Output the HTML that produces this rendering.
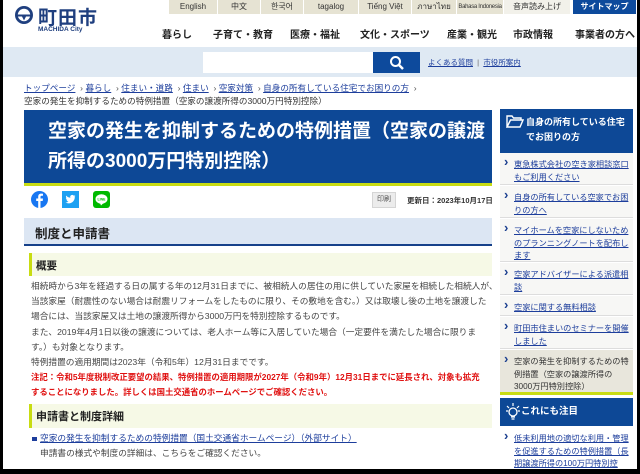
<!DOCTYPE html>
<html><head><meta charset="utf-8"><style>
*{margin:0;padding:0;box-sizing:border-box}
body{width:640px;height:474px;background:#000;overflow:hidden;font-family:"Liberation Sans","Noto Sans CJK JP",sans-serif;color:#333}
#pg{position:absolute;left:3px;top:0;width:634px;height:469px;background:#fff;overflow:hidden}
.a{position:absolute;white-space:nowrap}
a{color:#1d3e9c;text-decoration:underline}
.lang{position:absolute;top:0;height:14px;background:#e6e3d3;font-size:8px;text-align:center;line-height:14px;color:#333;border-right:1px solid #fff;white-space:nowrap;overflow:hidden}
.nav{position:absolute;top:26px;font-size:10px;font-weight:bold;color:#222;white-space:nowrap}
.bt{font-size:8.7px;line-height:15.2px;color:#444}
.sb{position:absolute;left:497px;width:133px;font-size:8.2px;line-height:12.5px;background:#f7f7f5;border-bottom:1px solid #ddd;padding:6px 4px 6px 14px}
.sb:before{content:"›";position:absolute;left:4px;top:3px;font-size:13px;font-weight:bold;color:#1b3f8f}
</style></head><body><div id="pg">
<svg class="a" style="left:11px;top:5px" width="20" height="20" viewBox="0 0 20 20"><circle cx="10" cy="10" r="9" fill="#1f3f7f"/><circle cx="10" cy="10" r="6.2" fill="#fff"/><path d="M3 9.5h14v2H12l-2 4-2-4H3z" fill="#1f3f7f"/></svg>
<div class="a" style="left:35px;top:3px;font-size:19px;font-weight:bold;color:#1f3f7f;letter-spacing:1px">町田市</div>
<div class="a" style="left:35px;top:26px;font-size:6.5px;font-weight:bold;color:#1f3f7f">MACHIDA City</div>
<div class="lang" style="left:166px;width:49px">English</div>
<div class="lang" style="left:215px;width:43px">中文</div>
<div class="lang" style="left:258px;width:43px">한국어</div>
<div class="lang" style="left:301px;width:55px">tagalog</div>
<div class="lang" style="left:356px;width:53px">Tiếng Việt</div>
<div class="lang" style="left:409px;width:45px">ภาษาไทย</div>
<div class="lang" style="left:454px;width:47px;font-size:6px;letter-spacing:-0.3px">Bahasa Indonesia</div>
<div class="lang" style="left:501px;width:67px;background:#f2f1ea">音声読み上げ</div>
<div class="lang" style="left:570px;width:64px;background:#0d4a9c;color:#fff;font-weight:bold">サイトマップ</div>
<div class="nav" style="left:159px">暮らし</div>
<div class="nav" style="left:210px">子育て・教育</div>
<div class="nav" style="left:287px">医療・福祉</div>
<div class="nav" style="left:357px">文化・スポーツ</div>
<div class="nav" style="left:444px">産業・観光</div>
<div class="nav" style="left:510px">市政情報</div>
<div class="nav" style="left:572px">事業者の方へ</div>
<div class="a" style="left:0;top:47px;width:634px;height:30px;background:#dfe9f3"></div>
<div class="a" style="left:200px;top:52px;width:170px;height:21px;background:#fff"></div>
<div class="a" style="left:370px;top:52px;width:47px;height:21px;background:#0d4a9c"></div>
<svg class="a" style="left:386px;top:55px" width="16" height="16" viewBox="0 0 16 16"><circle cx="6.5" cy="6.5" r="4.5" stroke="#fff" stroke-width="2" fill="none"/><path d="M10 10l4 4" stroke="#fff" stroke-width="2.5"/></svg>
<div class="a" style="left:425px;top:57px;font-size:7.5px"><a>よくある質問</a> <span style="color:#666">&nbsp;|&nbsp;</span> <a>市役所案内</a></div>
<div class="a" style="left:21px;top:82px;font-size:8.6px;color:#555"><a>トップページ</a> &nbsp;› <a>暮らし</a> &nbsp;› <a>住まい・道路</a> &nbsp;› <a>住まい</a> &nbsp;› <a>空家対策</a> &nbsp;› <a>自身の所有している住宅でお困りの方</a> &nbsp;›</div>
<div class="a" style="left:21px;top:95px;font-size:8.6px;color:#333">空家の発生を抑制するための特例措置（空家の譲渡所得の3000万円特別控除）</div>
<div class="a" style="left:21px;top:110px;width:468px;height:76px;background:#0d4896;border-bottom:3px solid #c8dc12"></div>
<div class="a" style="left:45px;top:117px;font-size:19px;font-weight:bold;color:#fff;line-height:30px;white-space:normal;width:440px">空家の発生を抑制するための特例措置（空家の譲渡所得の3000万円特別控除）</div>
<svg class="a" style="left:28px;top:191px" width="17" height="17" viewBox="0 0 17 17"><circle cx="8.5" cy="8.5" r="8.5" fill="#1877f2"/><path d="M9.5 17V10h2.2l.3-2.5H9.5V6c0-.7.3-1.2 1.2-1.2H12V2.7c-.3 0-1-.1-1.8-.1-1.9 0-3 1.1-3 3v1.9H5.2V10h2v7z" fill="#fff"/></svg>
<svg class="a" style="left:59px;top:191px" width="17" height="17" viewBox="0 0 17 17"><rect width="17" height="17" fill="#1da1f2"/><path d="M13.5 5.2c-.4.2-.8.3-1.2.3.4-.3.8-.7.9-1.2-.4.2-.9.4-1.3.5a2 2 0 00-3.5 1.9C6.7 6.6 5.2 5.8 4.2 4.6c-.6 1-.2 2.1.6 2.7-.3 0-.6-.1-.9-.3 0 1 .7 1.9 1.6 2-.3.1-.6.1-.9.1.3.8 1 1.4 1.9 1.4-.9.7-2 1.1-3.1.9 1 .6 2.1 1 3.3 1 4 0 6.2-3.4 6.1-6.5.4-.3.8-.7 1-1.1z" fill="#fff"/></svg>
<svg class="a" style="left:90px;top:191px" width="17" height="17" viewBox="0 0 17 17"><rect width="17" height="17" rx="3" fill="#00b900"/><ellipse cx="8.5" cy="8" rx="6" ry="4.8" fill="#fff"/><path d="M7 12l1 2.5 2-2z" fill="#fff"/><text x="8.5" y="9.4" font-size="3.5" text-anchor="middle" fill="#00b900" font-family="Liberation Sans" font-weight="bold">LINE</text></svg>
<div class="a" style="left:369px;top:192px;width:24px;height:16px;background:#ececec;border:1px solid #d5d5d5;font-size:7px;text-align:center;line-height:14px;color:#555">印刷</div>
<div class="a" style="left:404px;top:195px;font-size:7.5px;font-weight:bold;color:#333">更新日：2023年10月17日</div>
<div class="a" style="left:21px;top:218px;width:468px;height:28px;background:#dce6f3;border-bottom:2px solid #16418a"></div>
<div class="a" style="left:32px;top:223px;font-size:12.5px;font-weight:bold;color:#222">制度と申請書</div>
<div class="a" style="left:26px;top:253px;width:463px;height:23px;background:#f6f9e6;border-left:3px solid #c8dc12"></div>
<div class="a" style="left:33px;top:258px;font-size:10.5px;font-weight:bold;color:#222">概要</div>
<div class="a bt" style="left:28px;top:279px">相続時から3年を経過する日の属する年の12月31日までに、被相続人の居住の用に供していた家屋を相続した相続人が、<br>当該家屋（耐震性のない場合は耐震リフォームをしたものに限り、その敷地を含む。）又は取壊し後の土地を譲渡した<br>場合には、当該家屋又は土地の譲渡所得から3000万円を特別控除するものです。<br>また、2019年4月1日以後の譲渡については、老人ホーム等に入居していた場合（一定要件を満たした場合に限りま<br>す。）も対象となります。<br>特例措置の適用期間は2023年（令和5年）12月31日までです。<br><b style="color:#e01010;font-size:8.4px">注記：令和5年度税制改正要望の結果、特例措置の適用期限が2027年（令和9年）12月31日までに延長され、対象も拡充<br>することになりました。詳しくは国土交通省のホームページでご確認ください。</b></div>
<div class="a" style="left:26px;top:404px;width:463px;height:24px;background:#f6f9e6;border-left:3px solid #c8dc12"></div>
<div class="a" style="left:33px;top:408px;font-size:11px;font-weight:bold;color:#222">申請書と制度詳細</div>
<div class="a" style="left:29px;top:437px;width:5px;height:4px;background:#1d3e9c"></div>
<div class="a bt" style="left:37px;top:431px"><a>空家の発生を抑制するための特例措置（国土交通省ホームページ）（外部サイト）</a></div>
<div class="a bt" style="left:37px;top:446px">申請書の様式や制度の詳細は、こちらをご確認ください。</div>
<div class="a" style="left:497px;top:109px;width:133px;height:44px;background:#0d4896;color:#fff;font-size:9px;font-weight:bold;line-height:15px;padding:6px 4px 0 26px;white-space:normal">自身の所有している住宅でお困りの方</div>
<svg class="a" style="left:503px;top:115px" width="18" height="13" viewBox="0 0 18 13"><path d="M1 1h5l1.5 2H15v2H4.5L1 12z M4.5 5H17l-3 7H1z" fill="none" stroke="#fff" stroke-width="1.4"/></svg>
<div class="sb" style="top:153px;height:32px"><a>東急株式会社の空き家相談窓口もご利用ください</a></div>
<div class="sb" style="top:186px;height:32px"><a>自身の所有している空家でお困りの方へ</a></div>
<div class="sb" style="top:219px;height:43px"><a>マイホームを空家にしないためのプランニングノートを配布します</a></div>
<div class="sb" style="top:263px;height:32px"><a>空家アドバイザーによる派遣相談</a></div>
<div class="sb" style="top:296px;height:20px"><a>空家に関する無料相談</a></div>
<div class="sb" style="top:317px;height:32px"><a>町田市住まいのセミナーを開催しました</a></div>
<div class="sb" style="top:350px;height:45px;background:#e8e6dc;border-bottom:3px solid #c8dc12;color:#333">空家の発生を抑制するための特例措置（空家の譲渡所得の3000万円特別控除）</div>
<div class="a" style="left:497px;top:398px;width:133px;height:28px;background:#0d4896;color:#fff;font-size:9.5px;font-weight:bold;line-height:28px;padding-left:21px">これにも注目</div>
<svg class="a" style="left:502px;top:402px" width="16" height="20" viewBox="0 0 16 20"><circle cx="8" cy="10" r="4" fill="none" stroke="#fff" stroke-width="1.3"/><path d="M6 15h4M6.5 17h3M8 1v3M2 4l2 2M14 4l-2 2M1 9h2M13 9h2" stroke="#fff" stroke-width="1.2"/></svg>
<div class="sb" style="top:427px;height:50px;border:none;background:#fff"><a>低未利用地の適切な利用・管理を促進するための特例措置（長期譲渡所得の100万円特別控除）</a></div>
</div></body></html>
